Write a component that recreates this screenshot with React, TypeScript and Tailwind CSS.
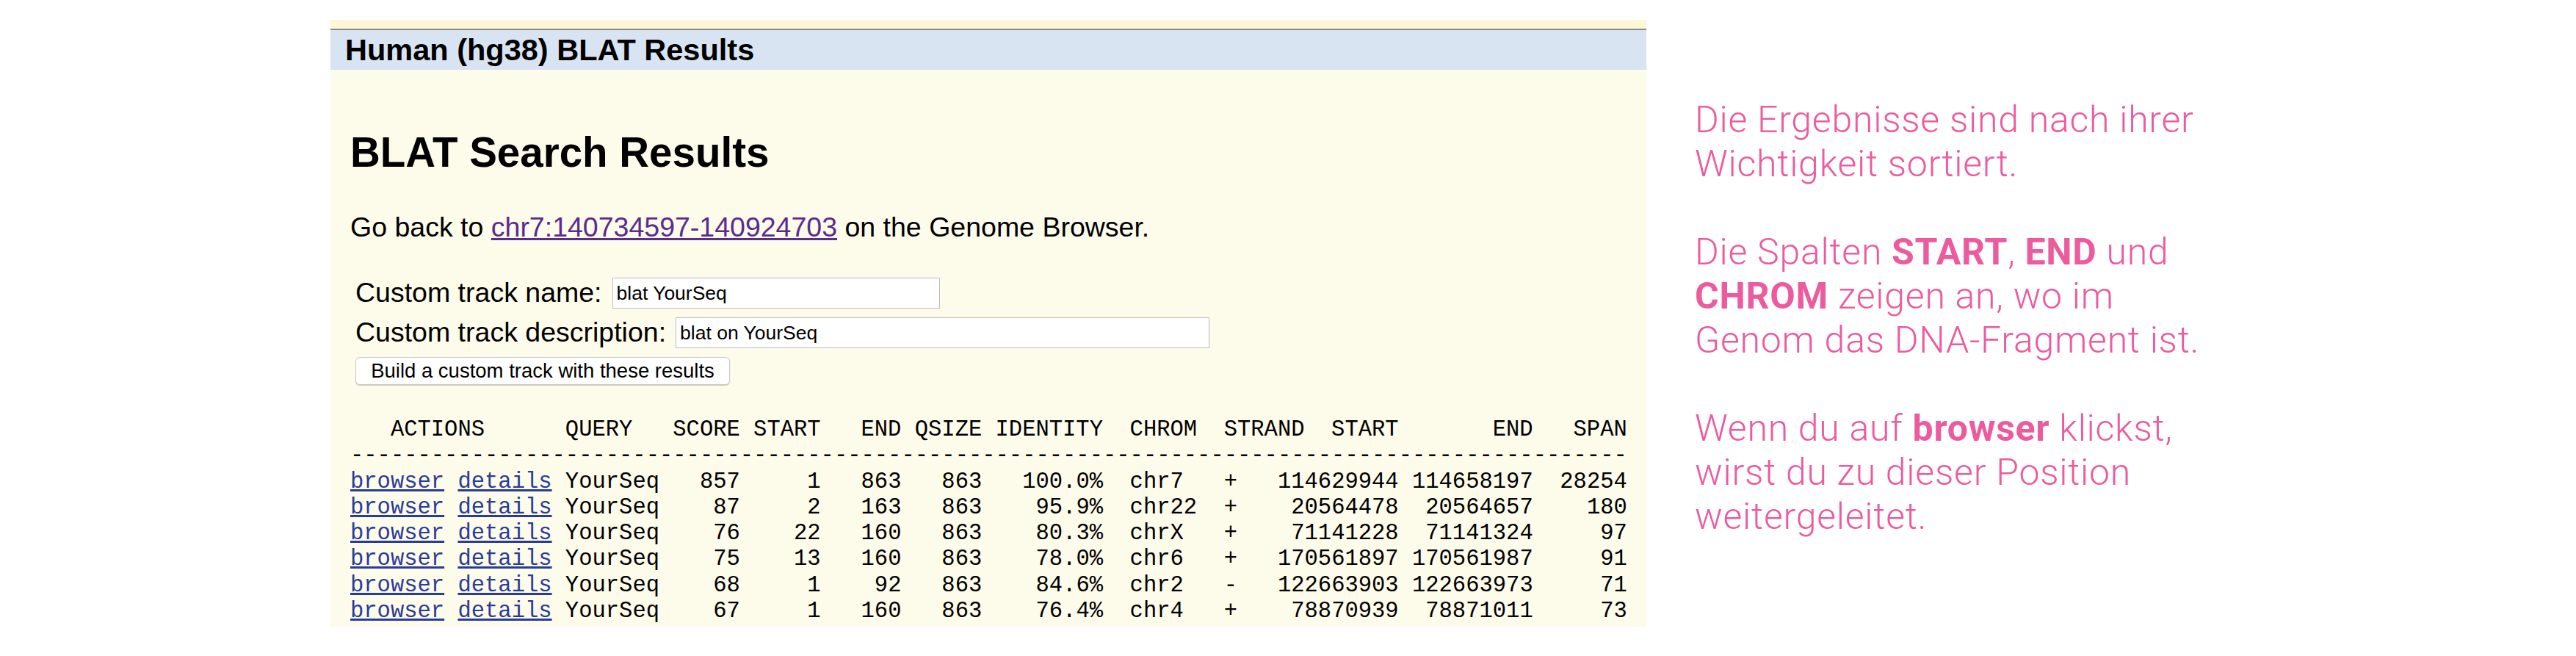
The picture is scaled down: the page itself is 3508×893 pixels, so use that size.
import React from 'react';

type Hit = {
  score: number;
  start: number;
  end: number;
  qsize: number;
  identity: string;
  chrom: string;
  strand: string;
  tStart: number;
  tEnd: number;
  span: number;
};

const hits: Hit[] = [
  { score: 857, start: 1, end: 863, qsize: 863, identity: '100.0%', chrom: 'chr7', strand: '+', tStart: 114629944, tEnd: 114658197, span: 28254 },
  { score: 87, start: 2, end: 163, qsize: 863, identity: '95.9%', chrom: 'chr22', strand: '+', tStart: 20564478, tEnd: 20564657, span: 180 },
  { score: 76, start: 22, end: 160, qsize: 863, identity: '80.3%', chrom: 'chrX', strand: '+', tStart: 71141228, tEnd: 71141324, span: 97 },
  { score: 75, start: 13, end: 160, qsize: 863, identity: '78.0%', chrom: 'chr6', strand: '+', tStart: 170561897, tEnd: 170561987, span: 91 },
  { score: 68, start: 1, end: 92, qsize: 863, identity: '84.6%', chrom: 'chr2', strand: '-', tStart: 122663903, tEnd: 122663973, span: 71 },
  { score: 67, start: 1, end: 160, qsize: 863, identity: '76.4%', chrom: 'chr4', strand: '+', tStart: 78870939, tEnd: 78871011, span: 73 },
];

const header = '   ACTIONS      QUERY   SCORE START   END QSIZE IDENTITY  CHROM  STRAND  START       END   SPAN';
const dashes = '-'.repeat(95);

// same column widths as the printf in the original page
const rowText = (h: Hit) =>
  ' YourSeq' +
  String(h.score).padStart(6) +
  String(h.start).padStart(6) +
  String(h.end).padStart(6) +
  String(h.qsize).padStart(6) +
  h.identity.padStart(9) +
  '  ' +
  h.chrom.padEnd(5) +
  '  ' +
  h.strand +
  String(h.tStart).padStart(12) +
  String(h.tEnd).padStart(10) +
  String(h.span).padStart(7);

const BlatPanel = () => {
  return (
    <div className="ml-[450px] mt-[27px] w-[1792px] h-[826px] bg-[#fdfbea] flex flex-col overflow-hidden">
      <div className="h-[12px] bg-[#fff7d6]" />
      <div className="h-[2px] bg-[#8a8a86]" />
      <div className="h-[54px] bg-[#d9e4f3] flex items-center pl-[20px]">
        <span className="text-[41.5px] font-bold text-black leading-none">Human (hg38) BLAT Results</span>
      </div>

      <div className="pl-[27px] pt-[81px] flex flex-col items-start">
        <h1 className="text-[56.5px] leading-[64px] font-bold text-black">BLAT Search Results</h1>
        <p className="mt-[47px] text-[37.5px] leading-[44px] text-black">
          Go back to{' '}
          <a className="text-[#5b2b8f] underline">chr7:140734597-140924703</a> on the Genome Browser.
        </p>

        <div className="mt-[47px] ml-[7px] flex flex-col items-start gap-[12px]">
          <div className="h-[42px] flex items-center gap-[14px]">
            <label className="text-[37.5px] leading-none text-black">Custom track name:</label>
            <input
              type="text"
              defaultValue="blat YourSeq"
              className="w-[446px] h-[42px] bg-white border border-[#bcbcbc] px-[5px] text-[26.5px] text-black outline-none"
            />
          </div>
          <div className="h-[42px] flex items-center gap-[13px]">
            <label className="text-[37.5px] leading-none text-black">Custom track description:</label>
            <input
              type="text"
              defaultValue="blat on YourSeq"
              className="w-[727px] h-[42px] bg-white border border-[#bcbcbc] px-[5px] text-[26.5px] text-black outline-none"
            />
          </div>
          <button className="w-[510px] h-[38px] bg-white border border-[#c9c9c9] rounded-[6px] shadow-[0_1px_1px_rgba(0,0,0,0.2)] text-[27.5px] leading-none text-black">
            Build a custom track with these results
          </button>
        </div>

        <pre className="mt-[44px] text-[30.5px] leading-[35.3px] text-black font-['Liberation_Mono',monospace]">
          {header + '\n' + dashes + '\n'}
          {hits.map((h, i) => (
            <React.Fragment key={i}>
              <a className="text-[#2a3c99] underline">browser</a> <a className="text-[#2a3c99] underline">details</a>
              {rowText(h) + '\n'}
            </React.Fragment>
          ))}
        </pre>
      </div>
    </div>
  );
};

const Notes = () => {
  return (
    <div className="ml-[66px] mt-[133px] text-[#ec5b9e] text-[50px] leading-[60px] font-light tracking-[0.75px] whitespace-nowrap font-['Roboto','Liberation_Sans',sans-serif]">
      <p>
        Die Ergebnisse sind nach ihrer
        <br />
        Wichtigkeit sortiert.
      </p>
      <p className="mt-[60px]">
        Die Spalten <b className="font-bold">START</b>, <b className="font-bold">END</b> und
        <br />
        <b className="font-bold">CHROM</b> zeigen an, wo im
        <br />
        Genom das DNA-Fragment ist.
      </p>
      <p className="mt-[60px]">
        Wenn du auf <b className="font-bold">browser</b> klickst,
        <br />
        wirst du zu dieser Position
        <br />
        weitergeleitet.
      </p>
    </div>
  );
};

export default function App() {
  return (
    <div className="w-[3508px] h-[893px] bg-white flex items-start font-['Liberation_Sans',Arial,sans-serif]">
      <BlatPanel />
      <Notes />
    </div>
  );
}
